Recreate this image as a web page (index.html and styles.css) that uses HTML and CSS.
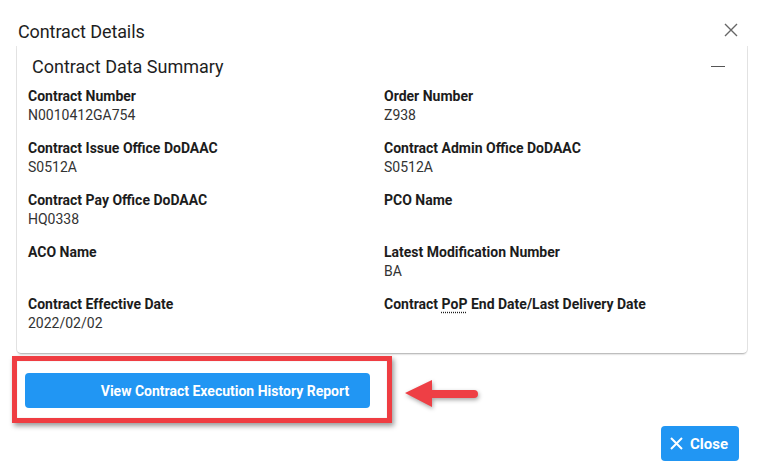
FILE: index.html
```html
<!DOCTYPE html>
<html>
<head>
<meta charset="utf-8">
<link rel="stylesheet" href="styles.css">
</head>
<body>
<div class="modal">
  <div class="modal-header">
    <h1 class="modal-title">Contract Details</h1>
    <svg class="x-icon" width="14" height="14" viewBox="0 0 14 14"><path d="M1 1L13 13M13 1L1 13" stroke="#666" stroke-width="1.4" fill="none"/></svg>
  </div>
  <div class="card">
    <div class="card-header">
      <h2 class="card-title">Contract Data Summary</h2>
      <span class="minus"></span>
    </div>
    <div class="grid">
      <div class="field"><div class="label">Contract Number</div><div class="value">N0010412GA754</div></div>
      <div class="field"><div class="label">Order Number</div><div class="value">Z938</div></div>
      <div class="field"><div class="label">Contract Issue Office DoDAAC</div><div class="value">S0512A</div></div>
      <div class="field"><div class="label">Contract Admin Office DoDAAC</div><div class="value">S0512A</div></div>
      <div class="field"><div class="label">Contract Pay Office DoDAAC</div><div class="value">HQ0338</div></div>
      <div class="field"><div class="label">PCO Name</div><div class="value"></div></div>
      <div class="field"><div class="label">ACO Name</div><div class="value"></div></div>
      <div class="field"><div class="label">Latest Modification Number</div><div class="value">BA</div></div>
      <div class="field"><div class="label">Contract Effective Date</div><div class="value">2022/02/02</div></div>
      <div class="field"><div class="label">Contract <abbr class="abbr">PoP</abbr> End Date/Last Delivery Date</div><div class="value"></div></div>
    </div>
  </div>
  <div class="report-row">
    <button class="btn report-btn">View Contract Execution History Report</button>
    <div class="highlight"></div>
    <svg class="arrow" width="80" height="34" viewBox="0 0 80 34">
      <path d="M2 15 L29 2 L29 12 L71 12 Q75 12 75 16 Q75 20 71 20 L29 20 L29 29 Z" fill="#ee3f45"/>
    </svg>
  </div>
  <div class="modal-footer">
    <button class="btn close-btn"><svg width="13" height="13" viewBox="0 0 13 13"><path d="M1 1L12 12M12 1L1 12" stroke="#fff" stroke-width="2" fill="none"/></svg><span>Close</span></button>
  </div>
</div>
</body>
</html>
```
FILE: styles.css
```css
* { box-sizing: border-box; }
html, body { margin: 0; padding: 0; background: #fff; }
body { font-family: Roboto, "Liberation Sans", Arial, sans-serif; color: #212121; width: 758px; height: 468px; overflow: hidden; }
.modal { width: 758px; height: 468px; }
.modal-header { height: 46px; display: flex; align-items: center; justify-content: space-between; padding: 20px 20px 4px 18px; }
.modal-title { margin: 0; font-size: 18px; font-weight: 400; color: #1e1e1e; letter-spacing: -0.1px; }
.x-icon { display: block; margin-top: -2px; }
.card { margin: 0 11px 0 17px; background: #fff; border-radius: 0 0 4px 4px; box-shadow: 0 2px 2px -1px rgba(0,0,0,0.35), -1px 0 0 #e6e6e6, 1px 0 0 #e6e6e6; padding: 0 0 20px 11px; }
.card-header { height: 41px; display: flex; align-items: center; justify-content: space-between; padding: 0 22px 0 4px; }
.card-title { margin: 0; font-size: 18px; font-weight: 400; color: #1e1e1e; }
.minus { width: 14px; height: 1.5px; background: #555; display: block; margin-top: 0; }
.grid { display: grid; grid-template-columns: 356px 1fr; row-gap: 14px; }
.field { display: flex; flex-direction: column; }
.label { font-size: 14px; font-weight: 700; line-height: 19px; color: #1c1c1c; }
.value { font-size: 14px; line-height: 19px; min-height: 19px; color: #333; }
.abbr { text-decoration: underline dotted; text-underline-offset: 3px; }
.report-row { position: relative; height: 73px; padding: 20px 0 0 25px; }
.btn { border: none; background: #2196f3; color: #fff; font-family: Roboto, "Liberation Sans", Arial, sans-serif; font-weight: 700; font-size: 14px; border-radius: 4px; cursor: pointer; }
.report-btn { width: 345px; height: 35px; padding: 0 0 0 55px; }
.highlight { position: absolute; left: 12px; top: 3px; width: 380px; height: 67px; border: 5px solid #ef3d42; box-shadow: 2px 3px 5px rgba(0,0,0,0.4), inset 0 0 1px rgba(0,0,0,0.3); }
.arrow { position: absolute; left: 403px; top: 25px; filter: drop-shadow(1px 2px 2px rgba(0,0,0,0.35)); }
.modal-footer { display: flex; justify-content: flex-end; padding: 0 19px 0 0; }
.close-btn { width: 78px; height: 35px; display: flex; align-items: center; justify-content: center; gap: 7px; font-size: 15px; padding: 0 2px 0 0; }
.close-btn svg { display: block; }
```
